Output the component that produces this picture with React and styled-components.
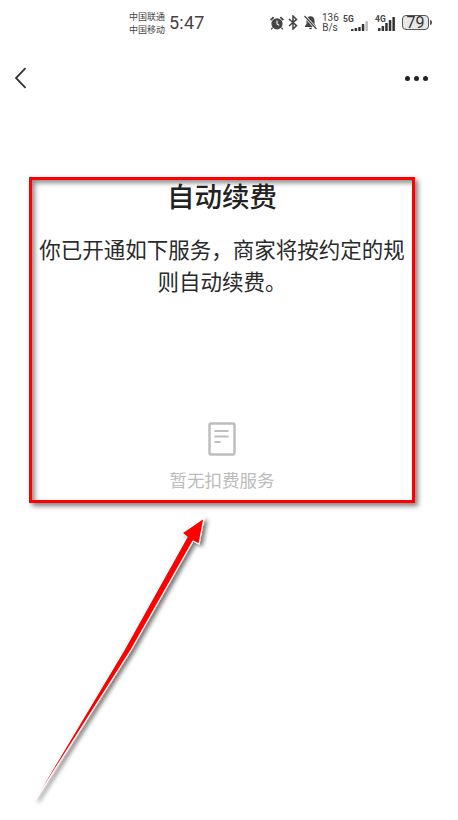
import React from "react";
import styled, { createGlobalStyle } from "styled-components";

const CJK = `"Noto Sans CJK SC", "Noto Sans", sans-serif`;

const Global = createGlobalStyle`
  html, body { margin: 0; padding: 0; background: #fff; }
  body { font-family: ${CJK}; }
`;

const Page = styled.div`
  position: relative;
  width: 458px;
  height: 820px;
  overflow: hidden;
  background: #fff;
`;

const StatusBar = styled.div`
  display: flex;
  align-items: center;
  height: 46px;
  padding-left: 129px;
  color: #444;
`;

const Carriers = styled.div`
  display: flex;
  flex-direction: column;
  width: 40px;
  font-size: 9px;
  line-height: 13px;
  white-space: nowrap;
`;

const Time = styled.div`
  width: 64px;
  font-family: Roboto, sans-serif;
  font-size: 18px;
  line-height: 20px;
  letter-spacing: 0.2px;
`;

const Icons = styled.div`
  display: flex;
  align-items: center;
  margin-left: 36px;
  margin-top: -1px;
`;

const Speed = styled.div`
  width: 16px;
  margin: 0 5px 0 4px;
  font-family: Roboto, sans-serif;
  font-size: 10px;
  line-height: 10px;
  text-align: center;
`;

const Signal = styled.div`
  position: relative;
  display: flex;
  align-items: flex-end;
  width: ${(p) => p.$w}px;
  height: 16px;
  margin-right: 6px;
`;

const SignalTag = styled.span`
  position: absolute;
  left: 0;
  top: 0;
  font-family: Roboto, sans-serif;
  font-size: 8.5px;
  font-weight: 700;
  line-height: 9px;
`;

const Battery = styled.div`
  display: flex;
  align-items: center;
  gap: 1px;
`;

const BatteryBody = styled.div`
  width: 25px;
  height: 13px;
  border: 1px solid #555;
  border-radius: 4px;
  background: #e8e8e8;
  font-family: Roboto, sans-serif;
  font-size: 16px;
  line-height: 13px;
  text-align: center;
  color: #333;
`;

const BatteryCap = styled.div`
  width: 2px;
  height: 5px;
  border-radius: 0 2px 2px 0;
  background: #555;
`;

const NavBar = styled.div`
  display: flex;
  align-items: center;
  justify-content: space-between;
  height: 64px;
  padding: 0 30px 0 14px;
`;

const Dots = styled.div`
  display: flex;
  gap: 4px;
`;

const Dot = styled.span`
  width: 5px;
  height: 5px;
  border-radius: 50%;
  background: #222;
`;

const Content = styled.div`
  display: flex;
  flex-direction: column;
  align-items: center;
  width: 372px;
  padding: 66px 0 0 36px;
`;

const Title = styled.h1`
  margin: 0;
  font-size: 27.5px;
  line-height: 38px;
  font-weight: 500;
  color: #222;
`;

const Description = styled.p`
  margin: 19px 0 0;
  width: 372px;
  font-size: 21.5px;
  line-height: 32px;
  font-weight: 400;
  color: #2a2a2a;
  text-align: center;
`;

const Empty = styled.div`
  display: flex;
  flex-direction: column;
  align-items: center;
  gap: 11px;
  margin-top: 125px;
`;

const EmptyText = styled.div`
  font-size: 17.5px;
  line-height: 26px;
  color: #bcbcbc;
`;

const Highlight = styled.div`
  position: absolute;
  left: 29px;
  top: 177px;
  width: 380px;
  height: 320px;
  border: 3px solid #f00;
  box-shadow: 3px 3px 5px rgba(0, 0, 0, 0.5), inset 3px 3px 5px rgba(0, 0, 0, 0.45);
`;

const ArrowLayer = styled.svg`
  position: absolute;
  left: 0;
  top: 0;
  pointer-events: none;
`;

const Alarm = () => (
  <svg width="16" height="16" viewBox="0 0 16 16" fill="#444" style={{ marginRight: 3 }}>
    <circle cx="8" cy="8.8" r="5.6" />
    <path d="M1 4.6 4 1.6l1.3 1.2-3 3zM15 4.6l-3-3-1.3 1.2 3 3z" />
    <path d="M8 5.5v3.4l2.3 1.500" fill="none" stroke="#fff" strokeWidth="1.100" />
    <path d="m3.600 12.600-1.400 1.700M12.400 12.600l1.400 1.700" stroke="#444" strokeWidth="1.300" />
  </svg>
);

const Bluetooth = () => (
  <svg width="10" height="15" viewBox="0 0 10 15" fill="none" stroke="#444" strokeWidth="1.500" style={{ marginRight: 5 }}>
    <path d="M1 4 8.500 10.600 5 14V1l3.500 3.400L1 11" />
  </svg>
);

const MutedBell = () => (
  <svg width="15" height="15" viewBox="0 0 15 15" fill="#444">
    <path d="M7.500 1.200c-2.700 0-4 2-4 4.400v3.200L2 11v1h11v-1l-1.500-2.200V5.600c0-2.400-1.300-4.400-4-4.400z" />
    <path d="M6 12.800h3a1.500 1.500 0 0 1-3 0z" />
    <path d="M1.500 1 13.500 14" stroke="#fff" strokeWidth="2.600" />
    <path d="M1.500 1 13.500 14" stroke="#444" strokeWidth="1.200" />
  </svg>
);

const Bars = ({ heights, light = 0, width = 18 }) => (
  <svg width={width} height="14" viewBox={`0 0 ${width} 14`}>
    {heights.map((h, i) => (
      <rect
        key={i}
        x={width - (heights.length - i) * 3.6}
        y={14 - h}
        width="2.500"
        height={h}
        rx="0.600"
        fill={i >= heights.length - light ? "#bbb" : "#333"}
      />
    ))}
  </svg>
);

const BackIcon = () => (
  <svg width="13" height="22" viewBox="0 0 13 22" fill="none" stroke="#333" strokeWidth="1.800">
    <path d="M11.500 1.200 2 11l9.500 9.800" />
  </svg>
);

const DocIcon = () => (
  <svg width="28" height="34" viewBox="0 0 28 34" fill="none" stroke="#bdbdbd" strokeWidth="2.400">
    <rect x="1.500" y="1.500" width="25" height="31" rx="1.500" />
    <path d="M6.500 9h14M6.500 14.500h14M6.500 20h6" strokeWidth="2" />
  </svg>
);

const Arrow = () => (
  <ArrowLayer width="458" height="820" viewBox="0 0 458 820">
    <defs>
      <filter id="arrowShadow" x="-20%" y="-20%" width="140%" height="140%">
        <feDropShadow dx="3" dy="2" stdDeviation="2" floodColor="#000" floodOpacity="0.55" />
      </filter>
    </defs>
    <polygon
      points="204,518 199,544 193,541 131,650 36,799 35,799 124,650 187,537 182,533"
      fill="#f00"
      stroke="#fff"
      strokeWidth="1.200"
      strokeLinejoin="round"
      filter="url(#arrowShadow)"
    />
  </ArrowLayer>
);

export default function App() {
  return (
    <Page>
      <Global />
      <StatusBar>
        <Carriers>
          <span>中国联通</span>
          <span>中国移动</span>
        </Carriers>
        <Time>5:47</Time>
        <Icons>
          <Alarm />
          <Bluetooth />
          <MutedBell />
          <Speed>
            136
            <br />
            B/s
          </Speed>
          <Signal $w={26}>
            <SignalTag>5G</SignalTag>
            <Bars heights={[2, 3, 4, 7, 10]} light={1} width={26} />
          </Signal>
          <Signal $w={21}>
            <SignalTag>4G</SignalTag>
            <Bars heights={[3, 5, 8, 11, 14]} width={21} />
          </Signal>
          <Battery>
            <BatteryBody>79</BatteryBody>
            <BatteryCap />
          </Battery>
        </Icons>
      </StatusBar>
      <NavBar>
        <BackIcon />
        <Dots>
          <Dot />
          <Dot />
          <Dot />
        </Dots>
      </NavBar>
      <Content>
        <Title>自动续费</Title>
        <Description>你已开通如下服务，商家将按约定的规则自动续费。</Description>
        <Empty>
          <DocIcon />
          <EmptyText>暂无扣费服务</EmptyText>
        </Empty>
      </Content>
      <Highlight />
      <Arrow />
    </Page>
  );
}
